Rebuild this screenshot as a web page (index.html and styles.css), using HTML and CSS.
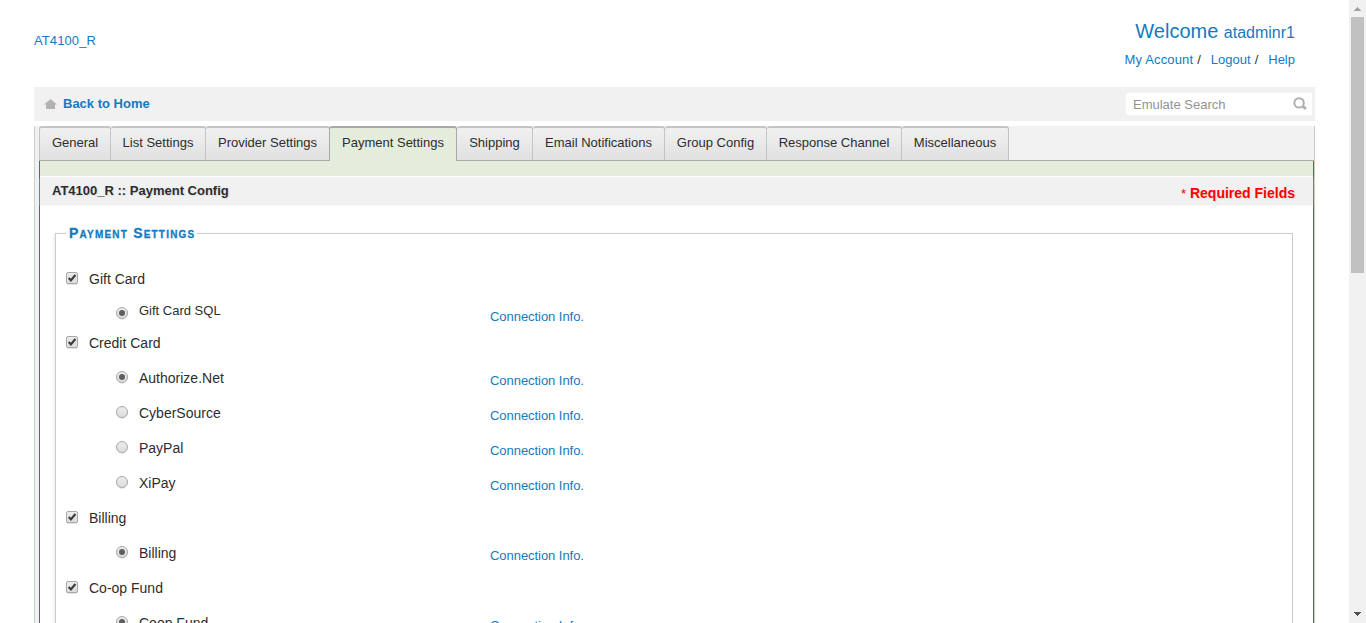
FILE: index.html
```html
<!DOCTYPE html>
<html lang="en">
<head>
<meta charset="utf-8">
<title>Payment Config</title>
<link rel="stylesheet" href="styles.css">
</head>
<body>
<svg class="defs" width="0" height="0" aria-hidden="true">
  <defs>
    <linearGradient id="ctl" x1="0" y1="0" x2="0" y2="1"><stop offset="0" stop-color="#ededed"/><stop offset="1" stop-color="#dcdcdc"/></linearGradient>
    <symbol id="check" viewBox="0 0 12 13">
      <rect x=".5" y="1" width="11" height="11.5" rx="1.5" fill="none" stroke="#e2e2e2"/>
      <rect x=".5" y=".5" width="11" height="11" rx="1.5" fill="url(#ctl)" stroke="#a9a9a9"/>
      <path d="M2.7 6.1 L4.9 8.4 L9.4 3" fill="none" stroke="#3c3c3c" stroke-width="2.2"/>
    </symbol>
    <symbol id="radio" viewBox="0 0 12 13">
      <circle cx="6" cy="6.8" r="5.5" fill="none" stroke="#e2e2e2"/>
      <circle cx="6" cy="6" r="5.5" fill="url(#ctl)" stroke="#a9a9a9"/>
    </symbol>
    <symbol id="radio-on" viewBox="0 0 12 13">
      <use href="#radio" width="12" height="13"/>
      <circle cx="6" cy="6" r="3" fill="#5f5f5f"/>
    </symbol>
  </defs>
</svg>
<div class="window">
  <main class="page">
    <header class="header">
      <a class="site">AT4100_R</a>
      <div class="user">
        <div class="welcome">Welcome <span class="name">atadminr1</span></div>
        <nav class="user-links"><a class="account">My Account</a><i>/</i><a>Logout</a><i>/</i><a>Help</a></nav>
      </div>
    </header>
    <div class="homebar">
      <svg class="home-icon" width="13" height="10" viewBox="0 0 13 10"><path d="M6.5 0 L13 5.6 H11 V10 H2 V5.6 H0 Z" fill="#b2b2b2"/></svg>
      <a class="back">Back to Home</a>
      <div class="search"><span>Emulate Search</span>
        <svg width="15" height="14" viewBox="0 0 15 14"><circle cx="6.1" cy="5.9" r="4.7" fill="none" stroke="#b0b0b0" stroke-width="2"/><path d="M9.7 9.1 L13 12" stroke="#b0b0b0" stroke-width="2.8"/></svg>
      </div>
    </div>
    <div class="shell">
      <nav class="tabs">
        <a class="tab first">General</a><a class="tab list">List Settings</a><a class="tab provider">Provider Settings</a><a class="tab active">Payment Settings</a><a class="tab shipping">Shipping</a><a class="tab email">Email Notifications</a><a class="tab config">Group Config</a><a class="tab response">Response Channel</a><a class="tab misc">Miscellaneous</a>
      </nav>
      <section class="panel">
        <div class="green"></div>
        <div class="title"><h1>AT4100_R :: Payment Config</h1><p><span>*</span> Required Fields</p></div>
        <div class="box">
          <h2><span>Payment Settings</span></h2>
          <div class="rows">
            <div class="row group"><svg class="ctl"><use href="#check"/></svg><span>Gift Card</span></div>
            <div class="row option short"><svg class="ctl"><use href="#radio-on"/></svg><span>Gift Card SQL</span><a>Connection Info.</a></div>
            <div class="row group"><svg class="ctl"><use href="#check"/></svg><span>Credit Card</span></div>
            <div class="row option"><svg class="ctl"><use href="#radio-on"/></svg><span>Authorize.Net</span><a>Connection Info.</a></div>
            <div class="row option"><svg class="ctl"><use href="#radio"/></svg><span>CyberSource</span><a>Connection Info.</a></div>
            <div class="row option"><svg class="ctl"><use href="#radio"/></svg><span>PayPal</span><a>Connection Info.</a></div>
            <div class="row option"><svg class="ctl"><use href="#radio"/></svg><span>XiPay</span><a>Connection Info.</a></div>
            <div class="row group"><svg class="ctl"><use href="#check"/></svg><span>Billing</span></div>
            <div class="row option"><svg class="ctl"><use href="#radio-on"/></svg><span>Billing</span><a>Connection Info.</a></div>
            <div class="row group"><svg class="ctl"><use href="#check"/></svg><span>Co-op Fund</span></div>
            <div class="row option"><svg class="ctl"><use href="#radio-on"/></svg><span>Coop Fund</span><a>Connection Info.</a></div>
          </div>
        </div>
      </section>
    </div>
  </main>
  <aside class="scrollbar">
    <svg width="17" height="17" shape-rendering="crispEdges"><path d="M5 11 L8.5 7 L12 11 Z" fill="#a3a3a3"/></svg>
    <div class="thumb"></div>
    <svg class="down" width="17" height="17" shape-rendering="crispEdges"><path d="M5 6 H12 L8.5 10 Z" fill="#505050"/></svg>
  </aside>
</div>
</body>
</html>
```
FILE: styles.css
```css
* { box-sizing: border-box; }
body { margin: 0; font: 13px/16px "Liberation Sans", Arial, sans-serif; color: #2d2d2d; background: #fff; overflow: hidden; }
a { color: #157abf; white-space: nowrap; }
h1, h2, p { margin: 0; }
.defs { display: block; width: 0; height: 0; }
.window { display: flex; height: 623px; overflow: hidden; }
.page { flex: 1; padding: 0 34px; }

.header { display: flex; justify-content: space-between; height: 87px; }
.site { padding-top: 33px; letter-spacing: .1px; }
.user { padding: 19px 20px 0 0; text-align: right; }
.welcome { font-size: 20px; line-height: 24px; color: #157abf; }
.name { font-size: 16px; }
.user-links { display: flex; justify-content: flex-end; margin-top: 7px; }
.user-links i { margin: 0 10px 0 4px; font-style: normal; }
.user-links .account { letter-spacing: .15px; }

.homebar { display: flex; align-items: center; height: 34px; padding: 0 3px 0 10px; background: #f1f1f1; }
.home-icon { margin: 0 6px 0 0; }
.back { font-weight: bold; }
.search { display: flex; align-items: center; justify-content: space-between; width: 186px; height: 22px; margin-left: auto; padding: 0 4px 0 7px; background: #fff; border-radius: 2px; color: #939393; }
.search span { padding-top: 1px; }
.search svg { margin-bottom: 1px; }

.shell { height: 520px; margin-top: 5px; padding-left: 4px; border: solid #ccc; border-width: 0 1px; background: #f1f1f1; }
.tabs { display: flex; height: 35px; border-bottom: 1px solid #aaa; background: #f2f2f2; }
.tab { flex: none; height: 34px; padding-top: 7px; border: solid #c4c4c4; border-width: 2px 1px 0 0; border-radius: 3px 3px 0 0; background: linear-gradient(#f1f1f1, #e0e0e0); color: #2d2d2d; line-height: 15px; text-align: center; }
.tab.first { width: 72px; border-left-width: 1px; }
.tab.list { width: 95px; }
.tab.provider { width: 124px; }
.tab.active { width: 128px; height: 35px; margin-left: -1px; border-color: #a8a8a8; border-left-width: 1px; background: #e4ecdb; }
.tab.shipping { width: 76px; }
.tab.email { width: 132px; }
.tab.config { width: 102px; }
.tab.response { width: 135px; }
.tab.misc { width: 107px; }

.panel { height: 485px; border: solid #157cb4; border-width: 0 1px; background: #fff; }
.green { height: 15px; background: #e4ecdb; }
.title { display: flex; justify-content: space-between; height: 28px; margin-top: 1px; padding: 0 18px 0 12px; background: #f1f1f1; box-shadow: 0 1px 1px #f7f7f7; text-shadow: 1px 1px 1px #ddd; }
.title h1 { padding-top: 5px; font-size: 13px; line-height: 17px; }
.title p { padding-top: 8px; color: #f00; font-size: 14px; font-weight: bold; }
.title p span { font-size: 13px; font-weight: normal; }
.box { height: 420px; margin: 28px 20px 0 15px; border: 1px solid #ccc; box-shadow: -1px 1px 3px #e8e8e8; }
.box h2 { height: 18px; margin: -10px 0 0 10px; font-size: 14px; line-height: 18px; }
.box h2 span { display: inline-block; padding: 0 2px 0 3px; background: #fff; color: #157abf; font-variant: small-caps; letter-spacing: 1.2px; -webkit-text-stroke: .3px #157abf; white-space: nowrap; }

.rows { padding-top: 19px; }
.row { display: flex; align-items: center; height: 35px; font-size: 14px; }
.ctl { flex: none; width: 12px; height: 13px; margin: 0 11px 0 10px; }
.option .ctl { margin: 0 11px 0 60px; }
.row span { width: 351px; }
.row a { padding-top: 6px; font-size: 13px; letter-spacing: -.05px; }
.row.short { height: 29px; font-size: 13px; }
.short .ctl { margin-top: 6px; }
.short a { padding-top: 12px; }

.scrollbar { display: flex; flex-direction: column; width: 17px; background: #f1f1f1; }
.thumb { width: 13px; height: 256px; margin-left: 2px; background: #c1c1c1; }
.down { margin-top: auto; }
```
